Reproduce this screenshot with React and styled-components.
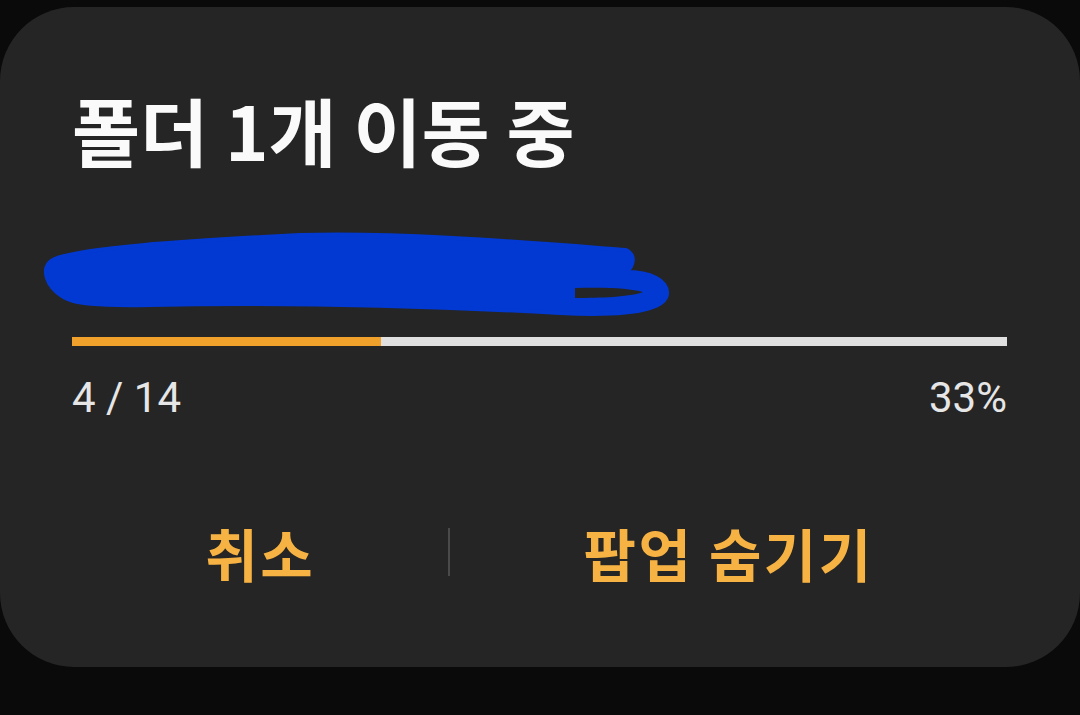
import React from "react";
import styled, { createGlobalStyle } from "styled-components";

const Global = createGlobalStyle`
  html, body { margin: 0; padding: 0; background: #0a0a0a; }
  body { font-family: "Noto Sans CJK KR", "Noto Sans", sans-serif; }
`;

const Screen = styled.div`
  width: 1080px;
  height: 715px;
  background: #0a0a0a;
  padding-top: 7px;
  box-sizing: border-box;
  overflow: hidden;
`;

const Card = styled.div`
  width: 1080px;
  height: 660px;
  background: #252525;
  border-radius: 74px;
  box-sizing: border-box;
  display: flex;
  flex-direction: column;
`;

const Title = styled.h1`
  margin: 0;
  padding: 78px 72px 0 72px;
  font-family: "Noto Sans CJK KR", sans-serif;
  font-size: 74px;
  font-weight: 600;
  line-height: 88px;
  color: #fafafa;
  letter-spacing: 0;
`;

const Scribble = styled.svg`
  display: block;
  margin-top: 55px;
  width: 700px;
  height: 95px;
`;

const Track = styled.div`
  margin: 14px 73px 0 72px;
  height: 9px;
  background: #e0e0e0;
  display: flex;
`;

const Fill = styled.div`
  height: 100%;
  background: #f0a12c;
`;

const Counts = styled.div`
  display: flex;
  justify-content: space-between;
  padding: 0 73px 0 72px;
  margin-top: 28px;
  font-family: Roboto, "Noto Sans", sans-serif;
  font-size: 42px;
  line-height: 48px;
  color: #e6e6e6;
`;

const Actions = styled.div`
  display: flex;
  align-items: center;
  padding: 0 73px 0 72px;
  margin-top: 95px;
`;

const Action = styled.button`
  flex: 1 1 auto;
  background: none;
  border: none;
  padding: 0;
  font-family: "Noto Sans CJK KR", sans-serif;
  font-size: 57px;
  font-weight: 700;
  line-height: 70px;
  letter-spacing: 2.5px;
  color: #f6b343;
  text-align: center;
  white-space: nowrap;
`;

const Divider = styled.div`
  width: 2px;
  height: 48px;
  background: #4a4a4a;
  flex: 0 0 auto;
`;

export default function App() {
  const done = 4;
  const total = 14;
  const pct = 33;
  return (
    <Screen>
      <Global />
      <Card>
        <Title>폴더 1개 이동 중</Title>
        <Scribble viewBox="0 228 700 95">
          <path
            d="M 50 262 C 62 248, 200 240, 300 235 C 400 232, 520 242, 626 250 C 636 255, 634 266, 626 272 C 650 272, 668 280, 667 294 C 665 312, 620 316, 560 313 C 450 307, 300 302, 150 305 C 100 306, 72 304, 62 296 C 46 286, 42 270, 50 262 Z"
            fill="#0239d2"
            stroke="#0239d2"
            strokeWidth="4"
            strokeLinejoin="round"
          />
          <path
            d="M 575 288 C 605 287, 630 288, 643 292 C 630 297, 600 298, 575 298 Z"
            fill="#252525"
          />
        </Scribble>
        <Track>
          <Fill style={{ width: `${pct}%` }} />
        </Track>
        <Counts>
          <span>{done} / {total}</span>
          <span>{pct}%</span>
        </Counts>
        <Actions>
          <Action>취소</Action>
          <Divider />
          <Action>팝업 숨기기</Action>
        </Actions>
      </Card>
    </Screen>
  );
}
